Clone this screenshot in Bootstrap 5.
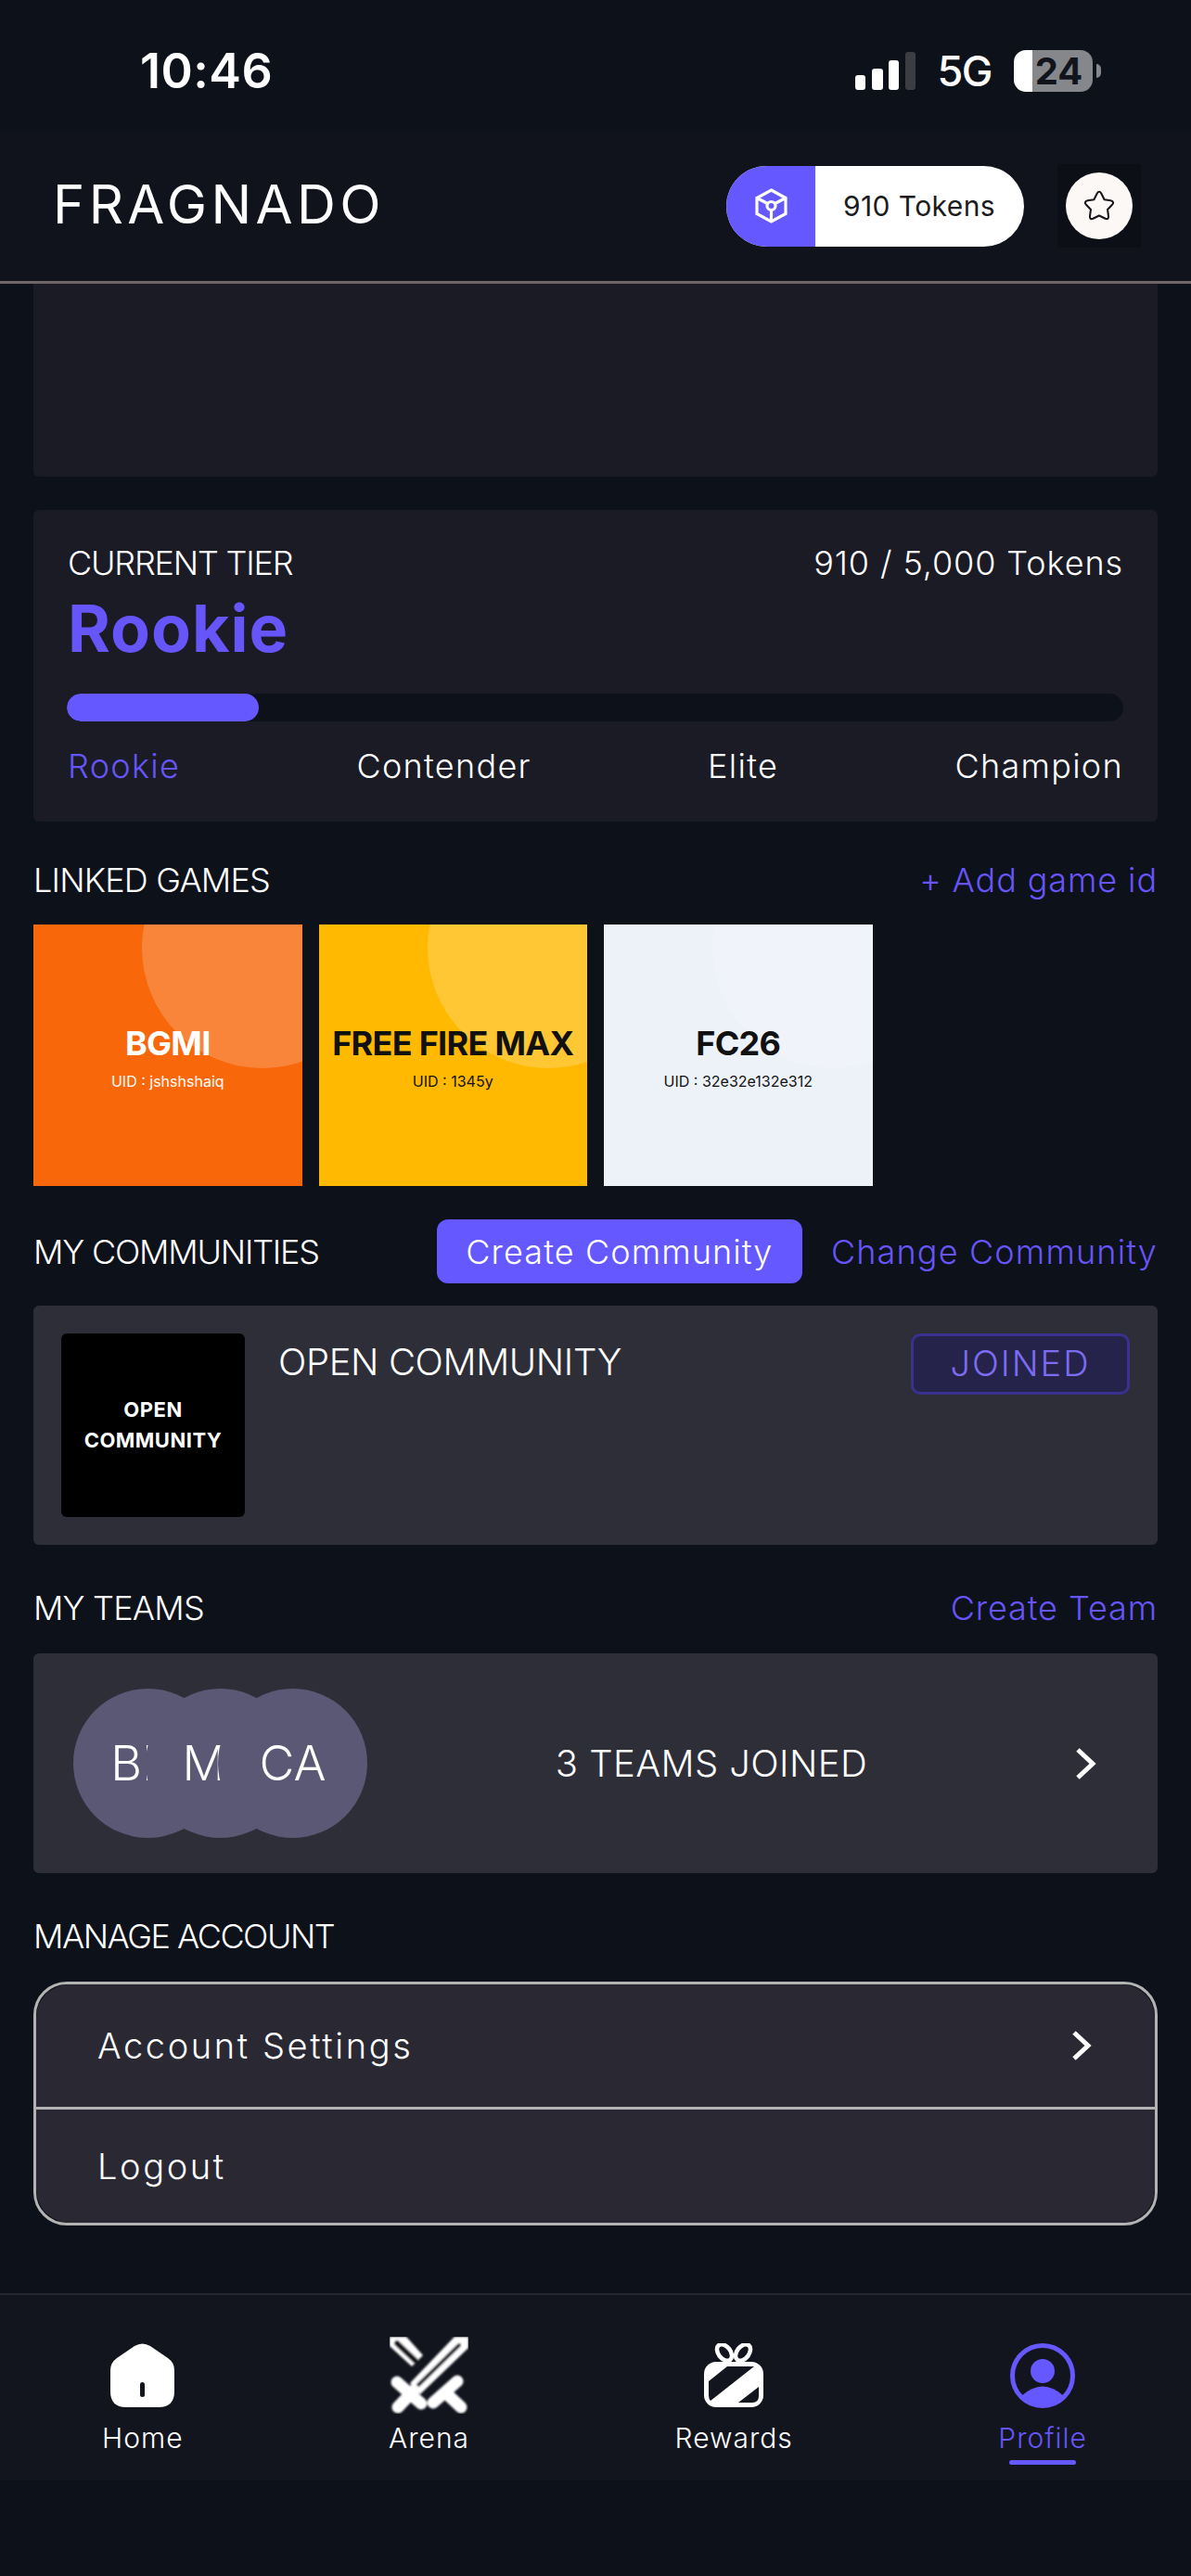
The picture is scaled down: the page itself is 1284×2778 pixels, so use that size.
<!DOCTYPE html>
<html lang="en">
<head>
  <meta charset="UTF-8">
  <meta name="viewport" content="width=device-width, initial-scale=1.0">
  <title>Fragnado Profile</title>
  <link href="https://cdn.jsdelivr.net/npm/bootstrap@5.3.0/dist/css/bootstrap.min.css" rel="stylesheet">
  <style>
    body { background: #0d1119; color: #fff; font-family: "Inter", "Liberation Sans", sans-serif; font-weight: 300; font-size: 36px; width: 1284px; height: 2778px; overflow: hidden; }
    .purple-text { color: #6655f8; }
    .caps-tight { letter-spacing: -.8px; }
    .caps-tighter { letter-spacing: -1.2px; }
    .caps-tightest { letter-spacing: -1.5px; }
    .word-wide { letter-spacing: .9px; }

    .status-strip { height: 141px; padding: 12px 97px 0 151px; }
    .clock { font-weight: 600; font-size: 52px; line-height: 1; letter-spacing: .5px; }
    .net-label { font-weight: 500; font-size: 45px; line-height: 1; margin: 0 24px; letter-spacing: -1.5px; }
    .battery-body { width: 85px; height: 45px; border-radius: 13px; background: linear-gradient(90deg, #fff 20px, #86878b 20px); color: #12141c; font-weight: 700; font-size: 40px; line-height: 45px; text-align: center; padding-left: 12px; }
    .battery-nub { width: 5px; height: 15px; margin-left: 4px; background: #86878b; border-radius: 0 8px 8px 0; }

    .top-header { height: 165px; background: #10131c; border-bottom: 3px solid #6f6565; padding: 0 54px 0 57px; }
    .logo-text { font-size: 58px; line-height: 1; font-weight: 400; letter-spacing: 4.4px; margin-top: -4px; }
    .token-pill { width: 321px; height: 87px; border-radius: 44px; overflow: hidden; background: #fff; }
    .token-icon { width: 96px; background: #6558ff; }
    .token-count { color: #1b1b20; font-size: 30px; font-weight: 400; padding-left: 30px; letter-spacing: .4px; }
    .star-box { width: 90px; height: 90px; margin-left: 36px; background: #0d0f16; }
    .star-circle { width: 72px; height: 72px; border-radius: 50%; background: #fcf8f6; }

    .page-body { padding: 0 36px; }
    .blank-panel { height: 208px; background: #1a1b25; border-radius: 0 0 6px 6px; margin-bottom: 36px; }
    .tier-panel { height: 336px; background: #1a1b25; border-radius: 6px; padding: 36px 37px 0; }
    .row-line { line-height: 42px; height: 42px; }
    .tier-name { font-size: 70px; font-weight: 700; line-height: 80px; margin-top: 10px; letter-spacing: 1px; }
    .tier-track { height: 30px; margin-top: 30px; margin-left: -1px; background: #0d1119; border-radius: 15px; }
    .tier-track .progress-bar { background: #6558ff; border-radius: 15px; }
    .tier-labels { margin-top: 27px; letter-spacing: 1.3px; }

    .head-games { margin-top: 42px; margin-bottom: 27px; }
    .tile-row { gap: 18px; }
    .game-tile { width: 289.5px; height: 282px; position: relative; overflow: hidden; padding-top: 110px; }
    .game-tile::before { content: ""; position: absolute; left: 117px; top: -105px; width: 260px; height: 260px; border-radius: 50%; background: rgba(255,255,255,.2); }
    .game-title { position: relative; font-size: 36px; font-weight: 700; line-height: 36px; letter-spacing: -.7px; }
    .game-uid { position: relative; font-size: 16px; font-weight: 400; line-height: 20px; margin-top: 13px; }
    .tile-orange { background: #f8670a; color: #fff; }
    .tile-yellow { background: #ffb900; color: #111; }
    .tile-white { background: #edf1f8; color: #111; }

    .head-comm { height: 69px; margin-top: 36px; margin-bottom: 24px; line-height: 42px; }
    .btn-create { background: #6558ff; color: #fff; border: 0; border-radius: 12px; height: 69px; width: 394px; font-size: 36px; font-weight: 300; padding: 0; margin-right: 31px; letter-spacing: 1.1px; }
    .btn-create:hover { background: #6558ff; color: #fff; }
    .comm-link { letter-spacing: 1.15px; }
    .grey-panel { background: #2e2e38; border-radius: 6px; border: 0; color: #fff; }
    .comm-panel { height: 258px; padding: 30px; }
    .comm-thumb { width: 198px; height: 198px; background: #000; border-radius: 6px; font-size: 22px; font-weight: 700; line-height: 33px; text-align: center; letter-spacing: .5px; }
    .comm-name { font-size: 40px; line-height: 62px; margin-left: 36px; letter-spacing: -.4px; }
    .joined-tag { width: 236px; height: 66px; background: #25234a; border: 3px solid #393090; border-radius: 10px; color: #7b6cf2; font-size: 38px; font-weight: 300; line-height: 58px; text-align: center; letter-spacing: 2px; }

    .head-teams { margin-top: 47px; margin-bottom: 28px; }
    .teams-panel { height: 237px; padding: 0 66px 0 43px; }
    .team-bubble { width: 161px; height: 161px; border-radius: 50%; background: #5a5874; font-size: 52px; line-height: 161px; text-align: center; white-space: nowrap; overflow: hidden; flex: none; }
    .team-bubble + .team-bubble { margin-left: -83px; }
    .teams-joined { font-size: 40px; padding-right: 20px; letter-spacing: .4px; }

    .account-list { border: 3px solid #b3b3b3; border-radius: 36px; overflow: hidden; }
    .account-list .list-group-item { height: 132px; background: #2a2933; color: #fff; border: 0; padding: 0 68px 0 66px; font-size: 38px; letter-spacing: 2.6px; }
    .account-list .list-group-item + .list-group-item { height: 125px; border-top: 3px solid #b3b3b3; }

    .bottom-nav { margin-top: 73px; height: 202px; background: #12151e; border-top: 2px solid #232630; padding: 45px 112px 0 110px; }
    .nav-cell { display: flex; flex-direction: column; align-items: center; }
    .nav-icon { height: 83px; display: flex; align-items: center; }
    .nav-text { font-size: 30px; line-height: 40px; margin-top: 6px; letter-spacing: 1px; font-weight: 300; }
    .nav-bar { width: 72px; height: 5px; border-radius: 3px; background: #6558ff; margin-top: 4px; }
  </style>
</head>
<body>
  <div class="status-strip d-flex align-items-center justify-content-between">
    <div class="clock">10:46</div>
    <div class="d-flex align-items-center">
      <svg width="65" height="41" viewBox="0 0 65 41">
        <rect x="0" y="25" width="11" height="16" rx="3" fill="#fff"/>
        <rect x="18" y="18" width="12" height="23" rx="3" fill="#fff"/>
        <rect x="36" y="9" width="11" height="32" rx="3" fill="#fff"/>
        <rect x="54" y="0" width="11" height="41" rx="3" fill="#3c3d42"/>
      </svg>
      <div class="net-label">5G</div>
      <div class="battery-body">24</div>
      <div class="battery-nub"></div>
    </div>
  </div>

  <header class="top-header d-flex align-items-center justify-content-between">
    <div class="logo-text">FRAGNADO</div>
    <div class="d-flex align-items-center">
      <div class="token-pill d-flex">
        <div class="token-icon d-flex align-items-center justify-content-center">
          <svg width="35" height="38" viewBox="0 0 35 38" fill="none" stroke="#fff" stroke-width="3.2">
            <polygon points="17.5,2 33,10.5 33,27.5 17.5,36 2,27.5 2,10.5"/>
            <circle cx="17.5" cy="19" r="4.5"/>
            <path d="M17.5 23.5V36M13.5 16.5L2 10.5M21.5 16.5L33 10.5"/>
          </svg>
        </div>
        <div class="token-count d-flex align-items-center">910 Tokens</div>
      </div>
      <div class="star-box d-flex align-items-center justify-content-center">
        <div class="star-circle d-flex align-items-center justify-content-center">
          <svg width="38" height="38" viewBox="0 0 40 40" fill="none" stroke="#17171c" stroke-width="2.2" stroke-linejoin="round">
            <path d="M14.1 12.9L17.5 6Q20 2 22.5 6L25.9 12.9L33 14Q38 15.5 34.5 19L29.5 24.1L30.5 31.5Q31 36 27 34.5L20 31L13 34.5Q9 36 9.5 31.5L10.5 24.1L5.5 19Q2 15.5 7 14Z"/>
          </svg>
        </div>
      </div>
    </div>
  </header>

  <div class="page-body">
    <div class="blank-panel"></div>

    <div class="tier-panel">
      <div class="row-line d-flex justify-content-between">
        <span class="caps-tighter">CURRENT TIER</span>
        <span class="word-wide">910 / 5,000 Tokens</span>
      </div>
      <div class="tier-name purple-text">Rookie</div>
      <div class="progress tier-track">
        <div class="progress-bar" style="width: 18.2%"></div>
      </div>
      <div class="tier-labels row-line d-flex justify-content-between">
        <span class="purple-text">Rookie</span>
        <span>Contender</span>
        <span>Elite</span>
        <span>Champion</span>
      </div>
    </div>

    <div class="head-games row-line d-flex justify-content-between">
      <span class="caps-tight">LINKED GAMES</span>
      <span class="purple-text word-wide">+ Add game id</span>
    </div>
    <div class="d-flex tile-row">
      <div class="game-tile tile-orange text-center">
        <div class="game-title">BGMI</div>
        <div class="game-uid">UID : jshshshaiq</div>
      </div>
      <div class="game-tile tile-yellow text-center">
        <div class="game-title">FREE FIRE MAX</div>
        <div class="game-uid">UID : 1345y</div>
      </div>
      <div class="game-tile tile-white text-center">
        <div class="game-title">FC26</div>
        <div class="game-uid">UID : 32e32e132e312</div>
      </div>
    </div>

    <div class="head-comm d-flex align-items-center justify-content-between">
      <span class="caps-tighter">MY COMMUNITIES</span>
      <div class="d-flex align-items-center">
        <button class="btn btn-create">Create Community</button>
        <span class="purple-text comm-link">Change Community</span>
      </div>
    </div>
    <div class="card grey-panel comm-panel flex-row align-items-start">
      <div class="comm-thumb d-flex align-items-center justify-content-center">OPEN<br>COMMUNITY</div>
      <div class="comm-name flex-grow-1">OPEN COMMUNITY</div>
      <div class="joined-tag">JOINED</div>
    </div>

    <div class="head-teams row-line d-flex justify-content-between">
      <span class="caps-tight">MY TEAMS</span>
      <span class="purple-text word-wide">Create Team</span>
    </div>
    <div class="card grey-panel teams-panel flex-row align-items-center">
      <div class="d-flex">
        <div class="team-bubble">BM</div>
        <div class="team-bubble">MA</div>
        <div class="team-bubble">CA</div>
      </div>
      <div class="teams-joined flex-grow-1 text-center">3 TEAMS JOINED</div>
      <svg width="24" height="36" viewBox="0 0 24 36" fill="none" stroke="#fff" stroke-width="5"><path d="M4 3L20 18L4 33"/></svg>
    </div>

    <div class="head-teams row-line caps-tightest">MANAGE ACCOUNT</div>
    <div class="list-group account-list">
      <div class="list-group-item d-flex align-items-center justify-content-between">
        <span>Account Settings</span>
        <svg width="22" height="32" viewBox="0 0 22 32" fill="none" stroke="#fff" stroke-width="5"><path d="M3 2L18 16L3 30"/></svg>
      </div>
      <div class="list-group-item d-flex align-items-center">Logout</div>
    </div>
  </div>

  <nav class="bottom-nav d-flex justify-content-between align-items-start">
    <div class="nav-cell">
      <div class="nav-icon">
        <svg width="69" height="69" viewBox="0 0 69 69">
          <path fill="#fff" d="M26 3Q34.5-2 43 3L62 16Q69 21 69 29V52Q69 69 52 69H17Q0 69 0 52V29Q0 21 7 16Z"/>
          <rect x="32" y="42" width="5" height="16" rx="2.5" fill="#12151e"/>
        </svg>
      </div>
      <div class="nav-text">Home</div>
    </div>
    <div class="nav-cell">
      <div class="nav-icon">
        <svg width="85" height="83" viewBox="0 0 85 83" fill="none" stroke-linecap="round">
          <filter id="softEdge"><feGaussianBlur stdDeviation="0.8"/></filter>
          <g filter="url(#softEdge)">
            <path d="M0 0H18L36 20L24 32L0 10Z" fill="#fff"/>
            <path d="M8 7L28 26" stroke="#12151e" stroke-width="6"/>
            <path d="M85 0V12L33 62L22 50L70 0Z" fill="#fff"/>
            <path d="M75 9L31 52" stroke="#12151e" stroke-width="4"/>
            <path d="M8 49L34 72M26 58L9 76M47 71L73 48M60 60L77 76" stroke="#fff" stroke-width="13"/>
          </g>
        </svg>
      </div>
      <div class="nav-text">Arena</div>
    </div>
    <div class="nav-cell">
      <div class="nav-icon">
        <svg width="64" height="69" viewBox="0 0 64 69" fill="none">
          <ellipse cx="22" cy="10" rx="6.5" ry="10" transform="rotate(-38 22 10)" stroke="#fff" stroke-width="4.5"/>
          <ellipse cx="42" cy="10" rx="6.5" ry="10" transform="rotate(38 42 10)" stroke="#fff" stroke-width="4.5"/>
          <rect x="0" y="20" width="64" height="49" rx="13" fill="#fff"/>
          <path fill="#12151e" d="M5 41L25 25H54L7 62Q5 60 5 56Z"/>
          <path fill="#12151e" d="M37 64L59 47V57Q59 64 52 64Z"/>
        </svg>
      </div>
      <div class="nav-text">Rewards</div>
    </div>
    <div class="nav-cell">
      <div class="nav-icon">
        <svg width="70" height="70" viewBox="0 0 70 70">
          <circle cx="35" cy="35" r="32.5" fill="none" stroke="#6558ff" stroke-width="5"/>
          <circle cx="35" cy="30" r="13" fill="#6558ff"/>
          <path fill="#6558ff" d="M12 57Q35 36 58 57A32 32 0 0 1 12 57Z"/>
        </svg>
      </div>
      <div class="nav-text purple-text">Profile</div>
      <div class="nav-bar"></div>
    </div>
  </nav>
</body>
</html>
